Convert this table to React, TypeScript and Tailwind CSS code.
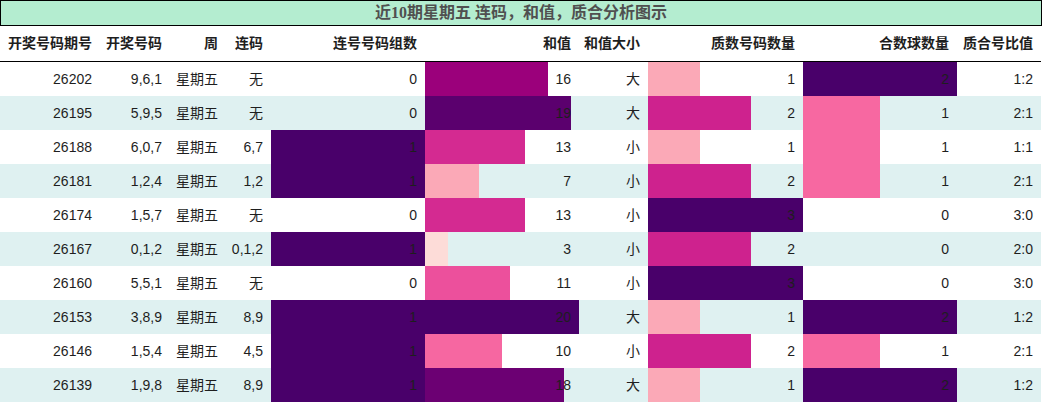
const rows = [
  { id: "26202", nums: "9,6,1", lian: "无", lz: 0, sum: 16, size: "大", zhi: 1, he: 2, ratio: "1:2" },
  { id: "26195", nums: "5,9,5", lian: "无", lz: 0, sum: 19, size: "大", zhi: 2, he: 1, ratio: "2:1" },
  { id: "26188", nums: "6,0,7", lian: "6,7", lz: 1, sum: 13, size: "小", zhi: 1, he: 1, ratio: "1:1" },
  { id: "26181", nums: "1,2,4", lian: "1,2", lz: 1, sum: 7, size: "小", zhi: 2, he: 1, ratio: "2:1" },
  { id: "26174", nums: "1,5,7", lian: "无", lz: 0, sum: 13, size: "小", zhi: 3, he: 0, ratio: "3:0" },
  { id: "26167", nums: "0,1,2", lian: "0,1,2", lz: 1, sum: 3, size: "小", zhi: 2, he: 0, ratio: "2:0" },
  { id: "26160", nums: "5,5,1", lian: "无", lz: 0, sum: 11, size: "小", zhi: 3, he: 0, ratio: "3:0" },
  { id: "26153", nums: "3,8,9", lian: "8,9", lz: 1, sum: 20, size: "大", zhi: 1, he: 2, ratio: "1:2" },
  { id: "26146", nums: "1,5,4", lian: "4,5", lz: 1, sum: 10, size: "小", zhi: 2, he: 1, ratio: "2:1" },
  { id: "26139", nums: "1,9,8", lian: "8,9", lz: 1, sum: 18, size: "大", zhi: 1, he: 2, ratio: "1:2" },
];

const sumColor: Record<number, string> = {
  3: "#fddcd8",
  7: "#fba9b7",
  10: "#f667a1",
  11: "#ec509c",
  13: "#d42a91",
  16: "#9b007b",
  18: "#6c0073",
  19: "#5b006e",
  20: "#49006a",
};
const zhiColor: Record<number, string> = { 1: "#fba9b7", 2: "#ce228e", 3: "#49006a" };
const heColor: Record<number, string> = { 1: "#f768a1", 2: "#49006a" };

function BarCell({ w, value, max, color }: { w: string; value: number; max: number; color?: string }) {
  return (
    <div className={`relative h-full ${w} flex items-center justify-end pr-2`}>
      {value > 0 && color && (
        <div
          className="absolute left-0 top-0 h-full"
          style={{ width: `${(value / max) * 100}%`, backgroundColor: color }}
        />
      )}
      <span className="relative">{value}</span>
    </div>
  );
}

export default function App() {
  return (
    <div
      className="w-[1042px] h-[403px] bg-white text-[14px] text-[#1e1e1e] overflow-hidden"
      style={{ fontFamily: '"Liberation Sans", "Noto Sans CJK SC", sans-serif' }}
    >
      <div className="h-[26px] w-[1042px] border border-black bg-[#b4edd0] flex items-center justify-center">
        <span
          className="text-[16px] font-bold text-[#505050]"
          style={{ fontFamily: '"Liberation Serif", "Noto Sans CJK SC", serif' }}
        >
          近10期星期五 连码，和值，质合分析图示
        </span>
      </div>

      <div className="h-[36px] w-[1041px] flex items-center border-b border-black font-bold">
        <div className="w-[100px] text-right pr-2">开奖号码期号</div>
        <div className="w-[70px] text-right pr-2">开奖号码</div>
        <div className="w-[56px] text-right pr-2">周</div>
        <div className="w-[45px] text-right pr-2">连码</div>
        <div className="w-[154px] text-right pr-2">连号号码组数</div>
        <div className="w-[154px] text-right pr-2">和值</div>
        <div className="w-[69px] text-right pr-2">和值大小</div>
        <div className="w-[155px] text-right pr-2">质数号码数量</div>
        <div className="w-[154px] text-right pr-2">合数球数量</div>
        <div className="w-[84px] text-right pr-2">质合号比值</div>
      </div>

      {rows.map((r, i) => (
        <div
          key={r.id}
          className={`h-[34px] w-[1041px] flex items-center ${i % 2 === 1 ? "bg-[#dff1f1]" : "bg-white"}`}
        >
          <div className="w-[100px] text-right pr-2">{r.id}</div>
          <div className="w-[70px] text-right pr-2">{r.nums}</div>
          <div className="w-[56px] text-right pr-2">星期五</div>
          <div className="w-[45px] text-right pr-2">{r.lian}</div>
          <BarCell w="w-[154px]" value={r.lz} max={1} color="#49006a" />
          <BarCell w="w-[154px]" value={r.sum} max={20} color={sumColor[r.sum]} />
          <div className="w-[69px] text-right pr-2">{r.size}</div>
          <BarCell w="w-[155px]" value={r.zhi} max={3} color={zhiColor[r.zhi]} />
          <BarCell w="w-[154px]" value={r.he} max={2} color={heColor[r.he]} />
          <div className="w-[84px] text-right pr-2">{r.ratio}</div>
        </div>
      ))}
    </div>
  );
}
